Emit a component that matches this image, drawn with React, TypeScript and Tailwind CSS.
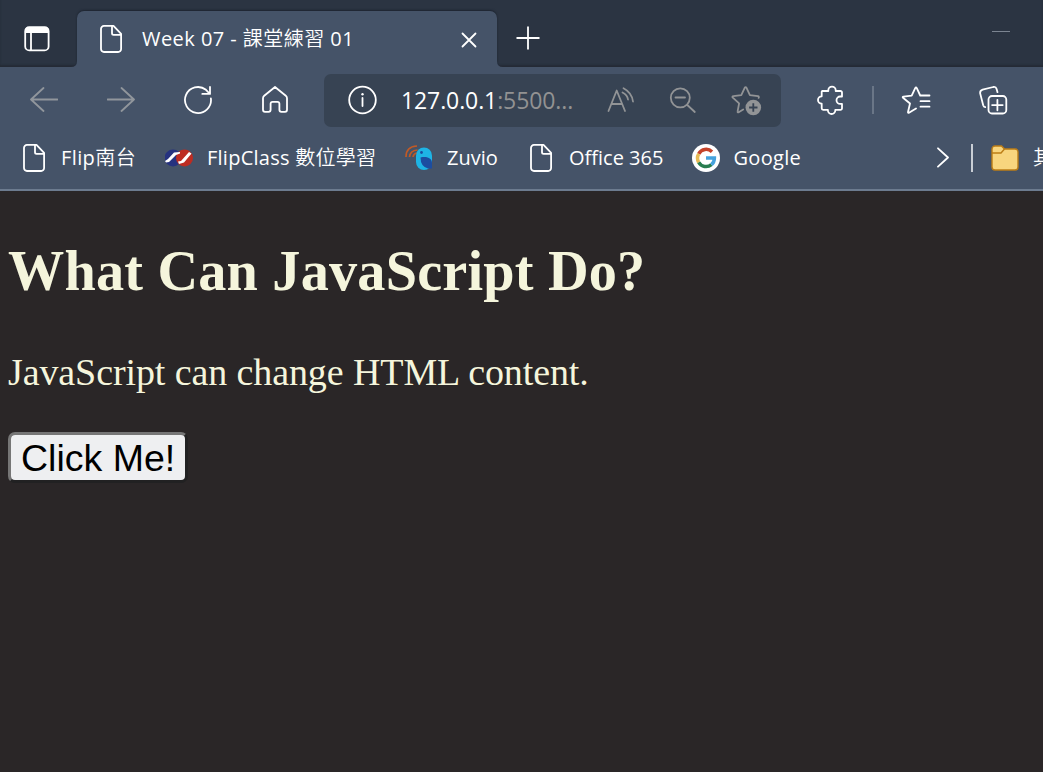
import React from "react";

type Box = { box: string; className: string; children: React.ReactNode };

function Icon({ box, className, children }: Box) {
  return (
    <svg
      viewBox={box}
      className={`block shrink-0 ${className}`}
      fill="none"
      stroke="currentColor"
      strokeWidth="1.8"
      strokeLinecap="round"
      strokeLinejoin="round"
    >
      {children}
    </svg>
  );
}

function PageIcon({ className }: { className: string }) {
  return (
    <Icon box="0 0 22 28" className={`h-7 w-[22px] ${className}`}>
      <path d="M4 .9h9.500l7.600 7.900V24a3 3 0 0 1-3 3H4a3 3 0 0 1-3-3V4A3 3 0 0 1 4 .9Z" />
      <path d="M12 1.200v7a1.600 1.600 0 0 0 1.600 1.600H21" />
    </Icon>
  );
}

function Label({ className, children }: { className: string; children: React.ReactNode }) {
  return (
    <span className={`block shrink-0 whitespace-nowrap text-[20px] leading-[28px] ${className}`}>
      {children}
    </span>
  );
}

function Han({ children }: { children: React.ReactNode }) {
  return (
    <span className="font-[350] leading-none [font-family:'Noto_Sans_CJK_TC',sans-serif]">{children}</span>
  );
}

function TabStrip() {
  return (
    <div className="flex h-[67px] bg-[#2b3442] shadow-[inset_0_-2px_2px_#242b35]">
      <div className="flex w-[77px] shrink-0 pl-6 pt-[26px]">
        <Icon box="0 0 26 26" className="h-[26px] w-[26px]">
          <rect x="1.200" y="1.200" width="23.400" height="23.200" rx="4" />
          <path d="M1 7V4.500A3.500 3.500 0 0 1 4.500 1h17A3.500 3.500 0 0 1 25 4.500V7Z" fill="currentColor" stroke="none" />
          <path d="M7 7v17" />
        </Icon>
      </div>
      <div className="relative mt-[11px] flex h-14 w-[420px] shrink-0 items-center rounded-t-[7px] bg-[#455368] shadow-[0_-1px_2px_#1d2430]">
        <svg viewBox="0 0 6 6" className="absolute -left-1.5 bottom-0 h-1.5 w-1.5">
          <path d="M6 0v6H0Q6 6 6 0Z" fill="#455368" />
        </svg>
        <svg viewBox="0 0 6 6" className="absolute -right-1.5 bottom-0 h-1.5 w-1.5">
          <path d="M0 0v6h6Q0 6 0 0Z" fill="#455368" />
        </svg>
        <PageIcon className="ml-[23px]" />
        <Label className="ml-5 w-[319px] tracking-[0.45px]">Week 07 - <Han>課堂練習</Han> 01</Label>
        <Icon box="0 0 16 16" className="mt-px h-4 w-4">
          <path d="m1.500 1.500 13 13m0-13-13 13" />
        </Icon>
      </div>
      <Icon box="0 0 24 24" className="ml-[19px] mt-[26px] h-6 w-6">
        <path d="M12 .5v23M.5 12h23" strokeLinecap="butt" />
      </Icon>
      <div className="ml-auto mr-[33px] mt-[31px] h-px w-[18px] bg-[#7b8491]" />
    </div>
  );
}

function Toolbar() {
  return (
    <div className="relative flex h-[66px] items-center bg-[#455368]">
      <Icon box="30 86 28 26" className="ml-[30px] h-[26px] w-7 text-[#91969c]">
        <path d="M57.500 98.500H31m12.500-11.500L31 98.500l12.500 11.500" />
      </Icon>
      <Icon box="107 86 28 26" className="ml-[49px] h-[26px] w-7 text-[#91969c]">
        <path d="M107.500 98.500H134m-12.500-11.500L134 98.500l-12.500 11.500" />
      </Icon>
      <Icon box="184 86 28 28" className="ml-[49px] h-7 w-7">
        <path d="M210.900 98.500A13 13 0 1 1 206 89.800l3.500 3.700M210 86.900v7h-7.700" />
      </Icon>
      <Icon box="261 86 28 28" className="ml-[49px] h-7 w-7">
        <path d="m275 87 10.800 8.800q1.200 1 1.200 2.500v11.500a2 2 0 0 1-2 2h-3.600a2 2 0 0 1-2-2v-6a2 2 0 0 0-2-2h-4.800a2 2 0 0 0-2 2v6a2 2 0 0 1-2 2H265a2 2 0 0 1-2-2V98.300q0-1.500 1.200-2.500Z" />
      </Icon>
      <div className="ml-[35px] flex h-[53px] w-[457px] shrink-0 items-center rounded-[7px] bg-[#374353]">
        <Icon box="0 0 30 30" className="ml-[23px] h-[30px] w-[30px]">
          <circle cx="15.500" cy="15" r="13.300" />
          <path d="M15.500 13v8" />
          <circle cx="15.500" cy="9.300" r="1.200" fill="currentColor" stroke="none" />
        </Icon>
        <span className="ml-6 block w-[205px] shrink-0 whitespace-nowrap text-[23px] leading-8 tracking-[-0.1px]">
          127.0.0.1<span className="text-[#929292]">:5500...</span>
        </span>
        <Icon box="606 84 30 30" className="h-[30px] w-[30px] text-[#929496]">
          <path d="m608.500 110 8.200-20.500L625 110m-13.600-7h10.600M623.500 87.200q8.500 4.500 9.500 13.300M622.500 91.500q5 2.500 5.500 7" />
        </Icon>
        <Icon box="669 86 28 28" className="ml-[33px] h-7 w-7 text-[#929496]">
          <circle cx="680.300" cy="97.800" r="9.500" />
          <path d="m687.300 105 7.500 7M675.500 97.500h9.500" />
        </Icon>
        <Icon box="730 85 32 32" className="ml-[33px] h-8 w-8 text-[#929496]">
          <path d="m743.200 110.500-4.500 2.700c-.8.500-1.300 0-1.100-.8l1.500-8-6.300-5.700c-.7-.7-.5-1.400.5-1.500l8-1 3.500-7.500c.4-.8 1.200-.8 1.600 0l3.500 7.500 8 1q1.500.2.700 1.700" />
          <circle cx="753.300" cy="108.500" r="7.800" fill="currentColor" stroke="none" />
          <path d="M753.300 104.300v8.400m-4.200-4.200h8.400" stroke="#374353" strokeLinecap="butt" />
        </Icon>
      </div>
      <Icon box="817 85 28 30" className="ml-9 h-[30px] w-7">
        <path d="M822 91h6.300v-.7a3.700 3.700 0 0 1 7.400 0v.7h4.800a1.500 1.500 0 0 1 1.500 1.500v4h-1.800a3.700 3.700 0 0 0 0 7.400h1.800v4.400a1.500 1.500 0 0 1-1.500 1.500h-5.200v.5a3.700 3.700 0 0 1-7.400 0v-.5h-4.700a1.500 1.500 0 0 1-1.500-1.500v-4.600a3.700 3.700 0 0 1 0-7.400v-3.800A1.500 1.500 0 0 1 822 91Z" />
      </Icon>
      <div className="ml-[27px] h-7 w-[2px] shrink-0 bg-[#6a7687]" />
      <Icon box="901 86 30 28" className="ml-[27px] h-7 w-[30px]">
        <path d="m916 108.500-7 4.200c-.7.400-1.100.1-1-.7l2-8.500-7-5.700q-.8-1 .5-1.200l8.200-1 3.500-7.500q.8-1.300 1.600 0l3.400 7.400h9.300M920.500 101.200h9M920.500 106.700h9" />
      </Icon>
      <Icon box="978 85 30 30" className="ml-[47px] h-[30px] w-[30px]">
        <path d="M985.200 107.200q-1.500-.3-2-2l-3.100-12.100a3.500 3.500 0 0 1 2.500-3.500l10.700-2.600q2.600-.5 3.300 2l.9 3.200" />
        <rect x="988.500" y="96" width="17.800" height="17.500" rx="3.500" />
        <path d="M997.400 99.800v10.500m-5.300-5.200h10.600" />
      </Icon>
    </div>
  );
}

function Bookmarks() {
  return (
    <div className="flex h-[58px] items-start overflow-hidden border-b-2 border-[#6c7b8f] bg-[#455368]">
      <div className="flex h-[50px] items-center">
        <PageIcon className="ml-[23px]" />
        <Label className="ml-[16px] w-[104px] tracking-[0.4px]">Flip<Han>南台</Han></Label>
        <svg viewBox="0 0 28 18" className="block h-[18px] w-7 shrink-0">
          <circle cx="8" cy="9" r="8.500" fill="#26327f" />
          <circle cx="19.500" cy="9" r="8.500" fill="#bd2c22" />
          <path d="M0 12 3 10 9 3.500 15 3 15 4.500 11 6 4 13 1 13.500Z" fill="#fff" />
          <path d="M13 12.500 16 12 24 3 26.500 4.500 19 13.500 14 15Z" fill="#fff" />
        </svg>
        <Label className="ml-[14px] w-[198px] tracking-[0.25px]">FlipClass <Han>數位學習</Han></Label>
        <svg viewBox="0 0 28 27" className="-mt-[1px] block h-[27px] w-7 shrink-0" fill="none">
          <path d="M1 13Q1 2.500 12 2M4.500 13q.5-6.500 8-7M8 13q.5-3.500 4-4" stroke="#c25a25" strokeWidth="1.700" />
          <path d="M11 11.500a8 8 0 0 1 16 0V18a8 8 0 0 1-16 0Z" fill="#1eb4e5" />
          <path d="M15.500 13.500C23 12 27 15 27 19v5.500H23q-7.500-2-7.500-11Z" fill="#1c4da0" />
          <circle cx="16.500" cy="8.500" r="1.400" fill="#1c4da0" />
        </svg>
        <Label className="ml-[14px] w-[83px]">Zuvio</Label>
        <PageIcon className="" />
        <Label className="ml-[17px] w-[123px]">Office 365</Label>
        <svg viewBox="0 0 28 28" className="block h-7 w-7 shrink-0" fill="none" strokeWidth="3.500">
          <circle cx="14" cy="14" r="14" fill="#fff" />
          <path d="M20 7.700A8.500 8.500 0 0 0 6.700 9.800" stroke="#c5432a" />
          <path d="M6.700 9.800a8.500 8.500 0 0 0 0 8.500" stroke="#e8bb55" />
          <path d="M6.700 18.300a8.500 8.500 0 0 0 12.700 2.400" stroke="#287d4f" />
          <path d="M19.400 20.700q3-2.500 3-6.700H14" stroke="#45a2dd" />
        </svg>
        <Label className="ml-[13.500px] w-[203.500px] tracking-[0.3px]">Google</Label>
        <Icon box="0 0 12 22" className="h-[22px] w-3">
          <path d="m1 1.300 10 9.200L1 19.700" />
        </Icon>
        <div className="ml-[22px] h-7 w-[2px] shrink-0 bg-[#c9ced5]" />
        <svg viewBox="0 0 28 26" className="ml-[18px] block h-[26px] w-7 shrink-0" stroke="#bc7d16" strokeWidth="1.400">
          <path d="M1 4a3 3 0 0 1 3-3h6.500l3 3H24a3 3 0 0 1 3 3v15a3 3 0 0 1-3 3H4a3 3 0 0 1-3-3Z" fill="#f8d57e" />
          <path d="M1 8h9l3.500-4" fill="none" />
        </svg>
        <Label className="ml-[14px]"><Han>其他</Han></Label>
      </div>
    </div>
  );
}

export default function App() {
  return (
    <div className="flex h-[772px] w-[1043px] flex-col overflow-hidden bg-[#2a2627]">
      <header className="text-white [font-family:'Open_Sans','Noto_Sans_CJK_TC',sans-serif]">
        <TabStrip />
        <Toolbar />
        <Bookmarks />
      </header>
      <main className="flex flex-col items-start px-2 pt-[48px] text-[#f5f5dc] [font-family:'Liberation_Serif',serif]">
        <h1 className="whitespace-nowrap text-[56.250px] font-bold leading-[64px] tracking-[0.2px]">What Can JavaScript Do?</h1>
        <p className="mt-[47px] whitespace-nowrap text-[38px] leading-[44px] tracking-[-0.1px]">JavaScript can change HTML content.</p>
        <button className="mt-[38px] h-[51px] w-[180px] rounded-[7px] border-[3px] border-b-[#212122] border-l-[#767676] border-r-[#212122] border-t-[#767676] bg-[#212122] text-left text-black [font-family:'Liberation_Sans',sans-serif]">
          <span className="block h-[45px] whitespace-nowrap rounded-[4px] bg-[#eeeff1] pl-[10px] pt-px text-[37.500px] leading-[44px]">Click Me!</span>
        </button>
      </main>
    </div>
  );
}
